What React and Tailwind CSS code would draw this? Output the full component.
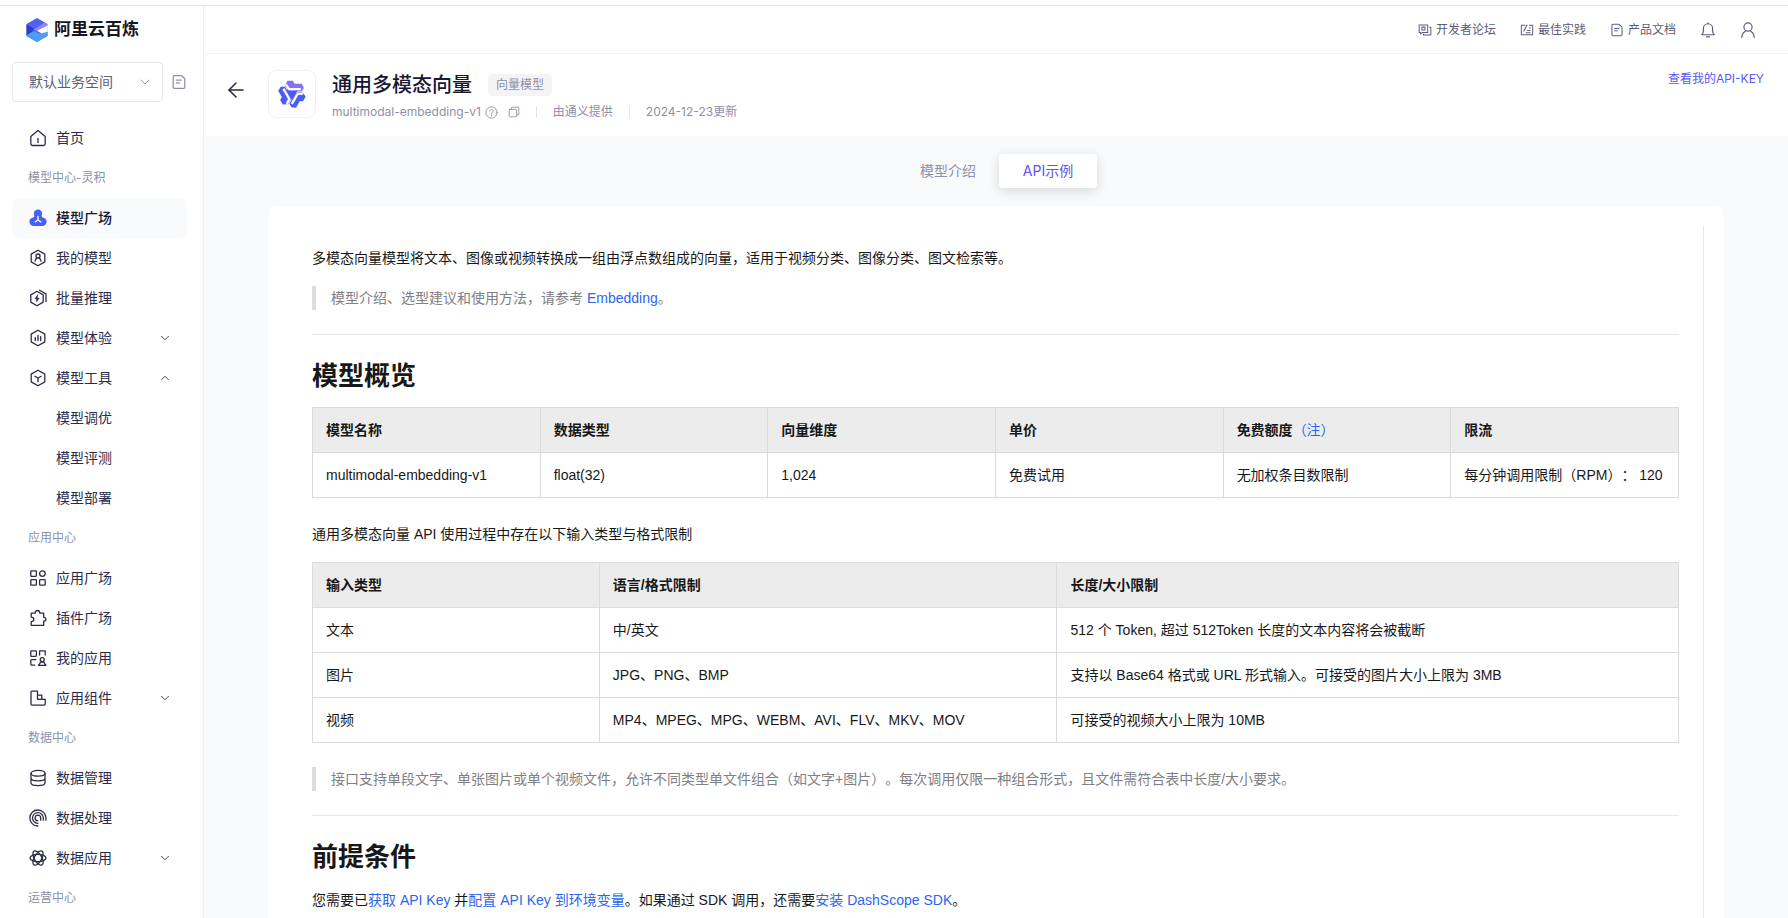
import { ArrowLeft, ChevronDown, ChevronUp } from 'lucide-react';

const HEX = 'M9 1.2l6.8 3.9v7.8L9 16.8l-6.8-3.9V5.1z';

const icons = {
  home: (
    <>
      <path d="M1.8 7.6 9 1.5l7.2 6.1v7.1a1.8 1.8 0 0 1-1.8 1.8H3.6a1.8 1.8 0 0 1-1.8-1.8z" />
      <path d="M9 9.5v4" />
    </>
  ),
  mine: (
    <>
      <path d={HEX} />
      <circle cx="9" cy="7" r="2" />
      <path d="M6 12.2c.2-1.5.9-2.5 1.9-3.4M12 12.2c-.2-1.5-.9-2.5-1.9-3.4" />
    </>
  ),
  batch: (
    <>
      <path d="M8 2.3l6.2 3.6v7.2L8 16.7l-6.2-3.6V5.9z" />
      <path d="M10.6 1.2l6.4 3.7v7.6" />
      <path d="M8.6 6 6 9.8h1.8L7.400 13l2.800-3.900H8.300z" fill="currentColor" strokeWidth="0.6" />
    </>
  ),
  bars: (
    <>
      <path d={HEX} />
      <path d="M6.3 8.6v3M9 6.3v5.3M11.7 7.7v3.9" />
    </>
  ),
  tools: (
    <>
      <path d={HEX} />
      <path d="M5.8 7.2 9 9l3.2-1.8M9 9v3.7" />
    </>
  ),
  grid: (
    <>
      <rect x="1.8" y="1.8" width="5.6" height="5.6" rx="0.8" />
      <circle cx="13.4" cy="4.6" r="2.8" />
      <rect x="1.8" y="10.6" width="5.6" height="5.6" rx="0.8" />
      <rect x="10.6" y="10.6" width="5.6" height="5.6" rx="0.8" />
    </>
  ),
  plugin: (
    <path d="M2.2 4.2h4c0-1.7.9-2.7 2.300-2.700s2.300 1 2.300 2.700h3.900v4.200c1.300 0 2.200.8 2.200 1.900S16 12.200 14.700 12.200v4.200H2.200v-3.700c1.700 0 2.600-.9 2.600-2.300S3.900 8.100 2.200 8.100z" />
  ),
  apps: (
    <>
      <rect x="1.8" y="1.8" width="5.6" height="5.6" rx="0.8" />
      <path d="M10.6 6V1.8h5.600V6M6.800 10.600h-4a1 1 0 0 0-1 1v3.600a1 1 0 0 0 1 1h3" />
      <circle cx="13.2" cy="10.6" r="2" />
      <path d="M9.4 16.3h7.600c-.9-.9-1.700-1.500-2-3.200h-3.600c-.3 1.700-1.100 2.300-2 3.200z" />
    </>
  ),
  component: (
    <>
      <path d="M2 3.2a1 1 0 0 1 1-1h5.500v4h4.300v4.100h3.400v4.800a1 1 0 0 1-1 1H3a1 1 0 0 1-1-1z" />
      <path d="M8.5 6.2v4.1h4.3" />
    </>
  ),
  database: (
    <>
      <ellipse cx="9" cy="4.3" rx="7" ry="2.9" />
      <path d="M2 4.3v9.400c0 1.600 3.100 2.900 7 2.900s7-1.300 7-2.900V4.300M2 9c0 1.600 3.100 2.900 7 2.900s7-1.300 7-2.900" />
    </>
  ),
  process: (
    <>
      <path d="M8.8 17A8 8 0 1 1 16.9 9v2.2" />
      <path d="M8.8 14.4A5.4 5.4 0 1 1 14.3 9v2.2" />
      <path d="M8.8 11.8A2.8 2.8 0 1 1 11.7 9v2.2" />
    </>
  ),
  atom: (
    <>
      <ellipse cx="9" cy="9" rx="8" ry="3.7" />
      <ellipse cx="9" cy="9" rx="8" ry="3.7" transform="rotate(60 9 9)" />
      <ellipse cx="9" cy="9" rx="8" ry="3.7" transform="rotate(120 9 9)" />
    </>
  ),
  doc: (
    <>
      <path d="M2.500 3.200A1.500 1.500 0 0 1 4 1.700h7.700l3.800 3.600v9.500a1.500 1.500 0 0 1-1.500 1.500H4a1.500 1.500 0 0 1-1.500-1.500z" />
      <path d="M6 7h5.500M6 10h3.500" />
    </>
  ),
  forum: (
    <>
      <path d="M1.5 2.5h11v9.800H5.500L3.300 14v-1.700H1.500z" />
      <path d="M5 5.300h4v3.800H5zM15 5.500h1.500v10H7V14" />
    </>
  ),
  practice: (
    <>
      <path d="M6.5 3H1.700v12.200h14.600V3H12" />
      <path d="M4.8 10.5 9 2.500M8 12.500h5M9.500 9.500H13M12 6.500h1" />
    </>
  ),
  bell: (
    <>
      <path d="M2 14.3h14c-1.200-1-1.800-2.300-1.800-4V7.200a5.200 5.200 0 0 0-10.400 0v3.100c0 1.700-.6 3-1.800 4z" />
      <path d="M7.3 16.8h3.400M9 .8v1.200" />
    </>
  ),
  user: (
    <>
      <circle cx="9" cy="5.6" r="4.6" />
      <path d="M2 17.4c0-3.300 1.600-5.800 4.400-7.400M16 17.400c0-3.300-1.600-5.800-4.400-7.400" />
    </>
  ),
  help: (
    <>
      <circle cx="9" cy="9" r="7.8" />
      <path d="M6.7 7.200c0-1.400 1-2.200 2.300-2.200s2.300.8 2.300 2.100c0 1.600-2.300 1.800-2.300 3.500M9 12.400v1.200" />
    </>
  ),
  copy: (
    <>
      <rect x="1.8" y="5" width="11.2" height="11.2" rx="1" />
      <path d="M5 5V2.800a1 1 0 0 1 1-1h9.200a1 1 0 0 1 1 1V12a1 1 0 0 1-1 1H13" />
    </>
  ),
};

const Icon = ({ name, size = 18, stroke = 1.3 }) => (
  <svg
    width={size}
    height={size}
    viewBox="0 0 18 18"
    fill="none"
    stroke="currentColor"
    strokeWidth={stroke}
    strokeLinejoin="round"
    strokeLinecap="round"
    className="shrink-0"
    aria-hidden="true"
  >
    {icons[name]}
  </svg>
);

const SquareIcon = () => (
  <svg width="18" height="18" viewBox="0 0 18 18" className="shrink-0" aria-hidden="true">
    <g fill="#4763f5">
      <circle cx="9" cy="4.8" r="4.2" />
      <circle cx="4.6" cy="12.8" r="4.2" />
      <circle cx="13.4" cy="12.8" r="4.2" />
      <path d="M5.4 7h7.200l2.400 5-1.500 4.900h-9L3 12z" />
    </g>
    <path d="M9 6.8v4.200l-3.200 2.200M9 11l3.200 2.200" stroke="#fff" strokeWidth="1.3" fill="none" />
  </svg>
);

const BrandLogo = () => (
  <svg width="22" height="24" viewBox="0 0 22 24" aria-hidden="true">
    <path d="M11 0 21.500 6v12L11 24 .5 18V6z" fill="#4f63f0" />
    <path d="M.5 6.500 8 10.500 7 14 .5 17.500z" fill="#2c3fc0" />
    <path d="M.5 17.300 7.500 13l7 3 7-2.500V18L11 24 .5 18z" fill="#4c9df0" />
    <path d="M7.500 11.500 18.800 4.600l2.200 1.600v1.500L13.500 12l-3 .8z" fill="#8f86fa" />
    <path d="M11 12.700 21.600 7.500v6.200L15.500 15.500z" fill="#fff" />
  </svg>
);

const ARM = 'M9.500.8h5.300l1.700 2.900h7.300l2.100 4.200-2.200 3.600H11L7.600 4.600z';
const BAR = 'M8 4.600 11 9.200h11.800';

const ModelLogo = () => (
  <svg width="28" height="28" viewBox="0 0 28 28" aria-hidden="true">
    <path d={ARM} fill="#4a5cf5" transform="rotate(240 14 14)" />
    <path d={ARM} fill="#4a5cf5" transform="rotate(120 14 14)" />
    <path d={ARM} fill="#8174f7" />
    <path d="M8 9.800h12L14 20.500z" fill="#4a5cf5" />
    {[0, 120, 240].map((deg) => (
      <g key={deg} transform={`rotate(${deg} 14 14)`} fill="none">
        <path d={BAR} stroke="#7d80e6" strokeWidth="3.2" strokeLinejoin="round" />
        <path d={BAR} stroke="#fff" strokeWidth="2.2" strokeLinejoin="round" />
      </g>
    ))}
  </svg>
);

const menu = [
  { label: '首页', icon: 'home' },
  { group: '模型中心-灵积' },
  { label: '模型广场', active: true },
  { label: '我的模型', icon: 'mine' },
  { label: '批量推理', icon: 'batch' },
  { label: '模型体验', icon: 'bars', arrow: 'down' },
  { label: '模型工具', icon: 'tools', arrow: 'up' },
  { label: '模型调优', child: true },
  { label: '模型评测', child: true },
  { label: '模型部署', child: true },
  { group: '应用中心' },
  { label: '应用广场', icon: 'grid' },
  { label: '插件广场', icon: 'plugin' },
  { label: '我的应用', icon: 'apps' },
  { label: '应用组件', icon: 'component', arrow: 'down' },
  { group: '数据中心' },
  { label: '数据管理', icon: 'database' },
  { label: '数据处理', icon: 'process' },
  { label: '数据应用', icon: 'atom', arrow: 'down' },
  { group: '运营中心' },
];

const MenuItem = ({ item }) => {
  if (item.group) {
    return <h2 className="flex h-10 shrink-0 items-center px-4 text-xs text-[#8f8fa8]">{item.group}</h2>;
  }
  return (
    <a
      href="#"
      className={`flex h-10 shrink-0 items-center gap-[9px] rounded-lg pr-[15px] pl-[17px] text-sm ${
        item.active ? 'bg-[#f9fafc] font-medium text-[#181830]' : 'text-[#2c2c4a]'
      }`}
    >
      {item.active && <SquareIcon />}
      {item.icon && <Icon name={item.icon} />}
      {item.child && <span className="w-[18px]" />}
      <span className="flex-1">{item.label}</span>
      {item.arrow === 'down' && <ChevronDown size={14} strokeWidth={1.5} />}
      {item.arrow === 'up' && <ChevronUp size={14} strokeWidth={1.5} />}
    </a>
  );
};

const Sidebar = () => (
  <aside className="flex w-[204px] shrink-0 flex-col overflow-hidden border-r border-[#f0f0f4]">
    <div className="flex h-12 shrink-0 items-center gap-1.5 pl-[26px]">
      <BrandLogo />
      <span className="text-[17px] font-bold text-[#18181f]">阿里云百炼</span>
    </div>
    <div className="mt-2 flex items-center gap-2 pl-3">
      <div className="relative w-[151px]">
        <select
          aria-label="业务空间"
          className="h-10 w-full appearance-none rounded border border-[#e6e6ec] bg-white pl-4 text-sm text-[#5c5c78]"
        >
          <option>默认业务空间</option>
        </select>
        <ChevronDown size={16} strokeWidth={1.3} className="pointer-events-none absolute top-3 right-2.5 text-[#8f8fa8]" />
      </div>
      <button aria-label="文档" className="text-[#8f8fa8]">
        <Icon name="doc" size={16} stroke={1.4} />
      </button>
    </div>
    <nav className="mt-4 flex flex-col pr-4 pl-3">
      {menu.map((item) => (
        <MenuItem key={item.label || item.group} item={item} />
      ))}
    </nav>
  </aside>
);

const TopLink = ({ icon, children }) => (
  <a href="#" className="flex items-center gap-1">
    <Icon name={icon} size={14} stroke={1.3} />
    {children}
  </a>
);

const TopBar = () => (
  <header className="flex h-12 shrink-0 items-center justify-end gap-6 border-b border-[#f4f4f7] pr-8 text-xs text-[#5c5c78]">
    <TopLink icon="forum">开发者论坛</TopLink>
    <TopLink icon="practice">最佳实践</TopLink>
    <TopLink icon="doc">产品文档</TopLink>
    <button aria-label="通知">
      <Icon name="bell" size={16} />
    </button>
    <button aria-label="账号">
      <Icon name="user" size={16} />
    </button>
  </header>
);

const ModelHeader = () => (
  <div className="flex shrink-0 items-start pt-4 pr-6 pb-3.5 pl-5">
    <button aria-label="返回" className="mt-2 mr-5 text-[#26263a]">
      <ArrowLeft size={24} strokeWidth={1.5} />
    </button>
    <div className="flex size-12 items-center justify-center rounded-lg border border-[#f2f2f5]">
      <ModelLogo />
    </div>
    <div className="ml-4 flex-1">
      <div className="flex items-center gap-4">
        <h1 className="text-xl leading-[30px] font-medium text-[#181830]">通用多模态向量</h1>
        <span className="rounded bg-[#f4f4f7] px-2 text-xs leading-[22px] text-[#8f8fa8]">向量模型</span>
      </div>
      <div className="mt-0.5 flex h-5 items-center text-xs text-[#8f8fa8]">
        <span>multimodal-embedding-v1</span>
        <button aria-label="说明" className="ml-1">
          <Icon name="help" size={13} />
        </button>
        <button aria-label="复制" className="ml-2.5">
          <Icon name="copy" size={12} />
        </button>
        <span className="mx-4 h-3 w-px bg-[#e4e4ea]" />
        <span>由通义提供</span>
        <span className="mx-4 h-3 w-px bg-[#e4e4ea]" />
        <span>2024-12-23更新</span>
      </div>
    </div>
    <a href="#" className="text-xs leading-[18px] text-[#5b55f5]">
      查看我的API-KEY
    </a>
  </div>
);

const Tabs = () => (
  <div className="flex h-[70px] items-center justify-center gap-0.5 pl-1 text-sm">
    <button className="h-[34px] w-[98px] text-[#8f8fa8]">模型介绍</button>
    <button className="h-[34px] w-[98px] rounded bg-white text-[#5b55f5] shadow-[0_3px_12px_rgba(0,0,0,0.14)]">
      API示例
    </button>
  </div>
);

const Link = ({ children }) => (
  <a href="#" className="text-[#2c66ee]">
    {children}
  </a>
);

const Quote = ({ children }) => (
  <blockquote className="border-l-4 border-[#dddddf] pl-[15px] text-[#808084]">{children}</blockquote>
);

const DataTable = ({ cols, head, rows }) => (
  <table className="w-full table-fixed border-collapse text-left">
    <colgroup>
      {cols.map((c, i) => (
        <col key={i} className={c} />
      ))}
    </colgroup>
    <thead className="bg-[#ececec]">
      <tr>
        {head.map((h, i) => (
          <th key={i} className="border border-[#dadbdc] px-[13px] py-2.5 font-bold">
            {h}
          </th>
        ))}
      </tr>
    </thead>
    <tbody>
      {rows.map((row) => (
        <tr key={row[0]}>
          {row.map((cell, i) => (
            <td key={i} className="border border-[#dadbdc] px-[13px] py-2.5 whitespace-nowrap">
              {cell}
            </td>
          ))}
        </tr>
      ))}
    </tbody>
  </table>
);

const overviewHead = [
  '模型名称',
  '数据类型',
  '向量维度',
  '单价',
  <>
    免费额度
    <a href="#" className="font-normal text-[#2c66ee]">
      （注）
    </a>
  </>,
  '限流',
];

const overviewRows = [
  ['multimodal-embedding-v1', 'float(32)', '1,024', '免费试用', '无加权条目数限制', '每分钟调用限制（RPM）： 120'],
];

const limitRows = [
  ['文本', '中/英文', '512 个 Token, 超过 512Token 长度的文本内容将会被截断'],
  ['图片', 'JPG、PNG、BMP', '支持以 Base64 格式或 URL 形式输入。可接受的图片大小上限为 3MB'],
  ['视频', 'MP4、MPEG、MPG、WEBM、AVI、FLV、MKV、MOV', '可接受的视频大小上限为 10MB'],
];

const Article = () => (
  <article className="border-r border-[#e9e9ec] px-6 pt-5 pb-10 font-['Liberation_Sans','Noto_Sans_CJK_SC',sans-serif] text-sm leading-6 text-[#181818] [text-spacing-trim:space-all]">
    <p>多模态向量模型将文本、图像或视频转换成一组由浮点数组成的向量，适用于视频分类、图像分类、图文检索等。</p>
    <div className="mt-4">
      <Quote>
        模型介绍、选型建议和使用方法，请参考 <Link>Embedding</Link>。
      </Quote>
    </div>
    <hr className="mt-6 border-[#e6e7e8]" />
    <h2 className="mt-[21px] mb-[11px] text-[26px] leading-10 font-bold">模型概览</h2>
    <DataTable
      cols={['w-1/6', 'w-1/6', 'w-1/6', 'w-1/6', 'w-1/6', 'w-1/6']}
      head={overviewHead}
      rows={overviewRows}
    />
    <p className="mt-6 mb-4">通用多模态向量 API 使用过程中存在以下输入类型与格式限制</p>
    <DataTable
      cols={['w-[21%]', 'w-[33.5%]', 'w-[45.5%]']}
      head={['输入类型', '语言/格式限制', '长度/大小限制']}
      rows={limitRows}
    />
    <div className="mt-6">
      <Quote>
        接口支持单段文字、单张图片或单个视频文件，允许不同类型单文件组合（如文字+图片）。每次调用仅限一种组合形式，且文件需符合表中长度/大小要求。
      </Quote>
    </div>
    <hr className="mt-6 border-[#e6e7e8]" />
    <h2 className="mt-[21px] mb-[11px] text-[26px] leading-10 font-bold">前提条件</h2>
    <p>
      您需要已<Link>获取 API Key</Link> 并<Link>配置 API Key 到环境变量</Link>。如果通过 SDK 调用，还需要
      <Link>安装 DashScope SDK</Link>。
    </p>
  </article>
);

export default function App() {
  return (
    <div
      lang="zh-CN"
      className="flex h-screen flex-col overflow-hidden bg-white pt-[5px] font-['Inter','Noto_Sans_CJK_SC',sans-serif]"
    >
      <div className="flex min-h-0 flex-1 border-t border-[#e4e4e6]">
        <Sidebar />
        <main className="flex min-w-0 flex-1 flex-col">
          <TopBar />
          <ModelHeader />
          <section className="min-h-0 flex-1 overflow-hidden bg-[#f9fafc] px-16">
            <Tabs />
            <div className="rounded-t-lg bg-white px-5 pt-5">
              <Article />
            </div>
          </section>
        </main>
      </div>
    </div>
  );
}
